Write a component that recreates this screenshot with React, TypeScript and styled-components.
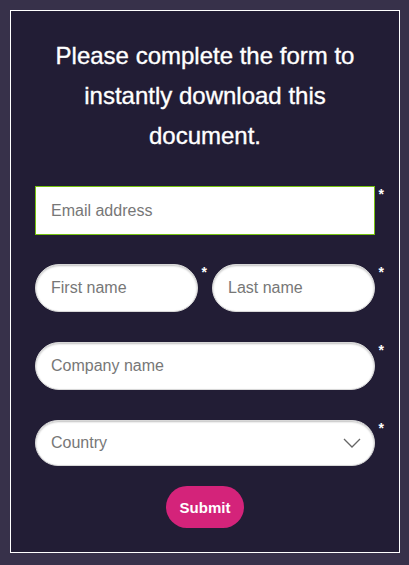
import React from "react";
import styled, { createGlobalStyle } from "styled-components";

const GlobalStyle = createGlobalStyle`
  html, body {
    margin: 0;
    padding: 0;
    background: #37314a;
    font-family: "Liberation Sans", Arial, Helvetica, sans-serif;
  }
  * {
    box-sizing: border-box;
  }
`;

const Page = styled.div`
  padding: 10px 9px 12px 10px;
`;

const Panel = styled.div`
  height: 543px;
  border: 1px solid #ffffff;
  background: #221d35;
  padding: 0 10px 0 24px;
  display: flex;
  flex-direction: column;
`;

const Heading = styled.h2`
  margin: 25px 0 0 -14px;
  color: #ffffff;
  font-size: 24px;
  font-weight: 400;
  line-height: 40px;
  text-align: center;
  -webkit-text-stroke: 0.35px #ffffff;
`;

const Form = styled.form`
  margin-top: 30px;
  display: flex;
  flex-direction: column;
`;

const Row = styled.div<{ $split?: boolean; $gap?: number }>`
  display: grid;
  grid-template-columns: ${({ $split }) => ($split ? "1fr 1fr" : "1fr")};
  margin-bottom: ${({ $gap }) => $gap ?? 30}px;
`;

const Field = styled.div`
  position: relative;
  padding-right: 14px;
`;

const Required = styled.span`
  position: absolute;
  right: 5px;
  top: 1px;
  color: #ffffff;
  font-size: 14px;
  font-weight: 700;
  line-height: 14px;
`;

const Input = styled.input<{ $square?: boolean; $h?: number }>`
  display: block;
  width: 100%;
  height: ${({ $h }) => $h ?? 48}px;
  border: ${({ $square }) => ($square ? "1px solid #76c20f" : "1px solid #d8d8d8")};
  border-radius: ${({ $square }) => ($square ? "0" : "24px")};
  background: #ffffff;
  box-shadow: ${({ $square }) => ($square ? "none" : "inset 0 1px 2px rgba(0,0,0,0.25)")};
  padding: 0 15px;
  font-family: "Liberation Sans", Arial, Helvetica, sans-serif;
  font-size: 16px;
  color: #333;
  outline: none;
  &::placeholder {
    color: #777777;
  }
`;

const SelectBox = styled.div`
  position: relative;
  height: 46px;
  border: 1px solid #d8d8d8;
  border-radius: 23px;
  background: #ffffff;
  box-shadow: inset 0 1px 2px rgba(0, 0, 0, 0.25);
  display: flex;
  align-items: center;
  justify-content: space-between;
  padding: 0 13px 0 15px;
  font-size: 16px;
  color: #777777;
`;

const Chevron = styled.svg`
  width: 18px;
  height: 10px;
`;

const SubmitButton = styled.button`
  align-self: center;
  margin: 20px 0 0 -14px;
  width: 78px;
  height: 42px;
  border: none;
  border-radius: 21px;
  background: #d4237a;
  color: #ffffff;
  font-family: "Liberation Sans", Arial, Helvetica, sans-serif;
  font-size: 15px;
  font-weight: 700;
  cursor: pointer;
`;

const App = () => {
  return (
    <>
      <GlobalStyle />
      <Page>
        <Panel>
          <Heading>
            Please complete the form to
            <br />
            instantly download this
            <br />
            document.
          </Heading>
          <Form onSubmit={(e) => e.preventDefault()}>
            <Row $gap={29}>
              <Field>
                <Input $square $h={49} placeholder="Email address" />
                <Required>*</Required>
              </Field>
            </Row>
            <Row $split>
              <Field>
                <Input placeholder="First name" />
                <Required>*</Required>
              </Field>
              <Field>
                <Input placeholder="Last name" />
                <Required>*</Required>
              </Field>
            </Row>
            <Row>
              <Field>
                <Input placeholder="Company name" />
                <Required>*</Required>
              </Field>
            </Row>
            <Row $gap={0}>
              <Field>
                <SelectBox>
                  <span>Country</span>
                  <Chevron viewBox="0 0 18 10">
                    <path d="M1 1 L9 9 L17 1" fill="none" stroke="#666" strokeWidth="1.3" />
                  </Chevron>
                </SelectBox>
                <Required>*</Required>
              </Field>
            </Row>
            <SubmitButton type="submit">Submit</SubmitButton>
          </Form>
        </Panel>
      </Page>
    </>
  );
};

export default App;
